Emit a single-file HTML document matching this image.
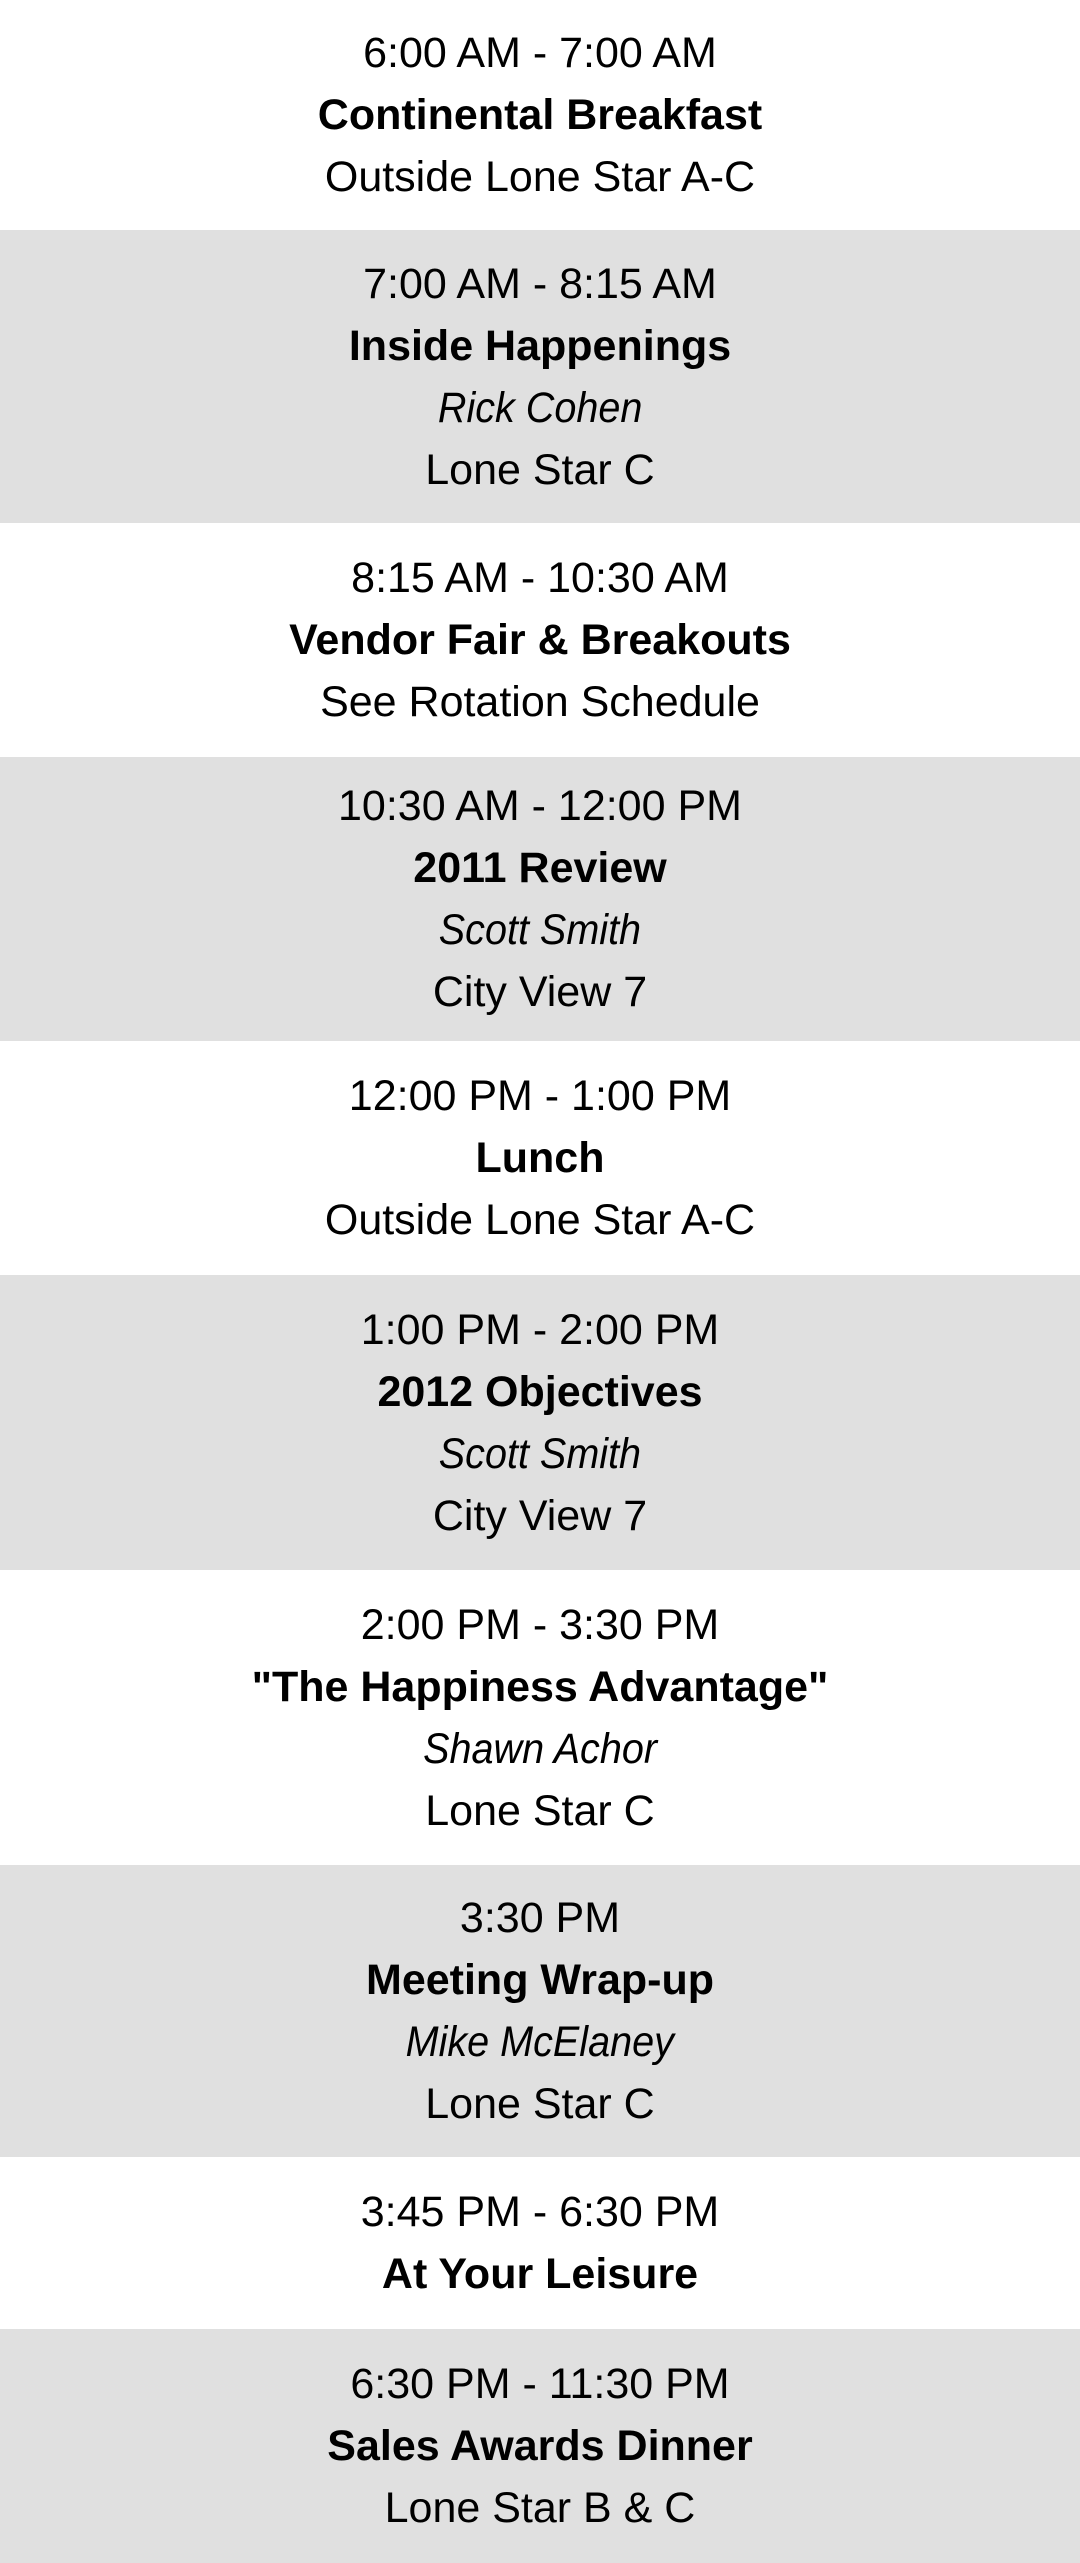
<!DOCTYPE html>
<html><head><meta charset="utf-8"><style>
html,body{margin:0;padding:0;}
body{width:1080px;height:2563px;overflow:hidden;font-family:"Liberation Sans",sans-serif;color:#000;}
.r{display:flex;flex-direction:column;justify-content:center;align-items:center;box-sizing:border-box;}
.g{background:#e0e0e0;}
.w{background:#fff;}
.l{display:block;font-size:43px;line-height:62px;white-space:nowrap;}
.b{font-weight:bold;}
.i{font-style:italic;transform:scaleX(0.92);}
</style></head><body>
<div class="r w" style="height:230px"><span class="l">6:00 AM - 7:00 AM</span><span class="l b">Continental Breakfast</span><span class="l">Outside Lone Star A-C</span></div>
<div class="r g" style="height:293px"><span class="l">7:00 AM - 8:15 AM</span><span class="l b">Inside Happenings</span><span class="l i">Rick Cohen</span><span class="l">Lone Star C</span></div>
<div class="r w" style="height:234px"><span class="l">8:15 AM - 10:30 AM</span><span class="l b">Vendor Fair &amp; Breakouts</span><span class="l">See Rotation Schedule</span></div>
<div class="r g" style="height:284px"><span class="l">10:30 AM - 12:00 PM</span><span class="l b">2011 Review</span><span class="l i">Scott Smith</span><span class="l">City View 7</span></div>
<div class="r w" style="height:234px"><span class="l">12:00 PM - 1:00 PM</span><span class="l b">Lunch</span><span class="l">Outside Lone Star A-C</span></div>
<div class="r g" style="height:295px"><span class="l">1:00 PM - 2:00 PM</span><span class="l b">2012 Objectives</span><span class="l i">Scott Smith</span><span class="l">City View 7</span></div>
<div class="r w" style="height:295px"><span class="l">2:00 PM - 3:30 PM</span><span class="l b">"The Happiness Advantage"</span><span class="l i">Shawn Achor</span><span class="l">Lone Star C</span></div>
<div class="r g" style="height:292px"><span class="l">3:30 PM</span><span class="l b">Meeting Wrap-up</span><span class="l i">Mike McElaney</span><span class="l">Lone Star C</span></div>
<div class="r w" style="height:172px"><span class="l">3:45 PM - 6:30 PM</span><span class="l b">At Your Leisure</span></div>
<div class="r g" style="height:234px"><span class="l">6:30 PM - 11:30 PM</span><span class="l b">Sales Awards Dinner</span><span class="l">Lone Star B &amp; C</span></div>
</body></html>
